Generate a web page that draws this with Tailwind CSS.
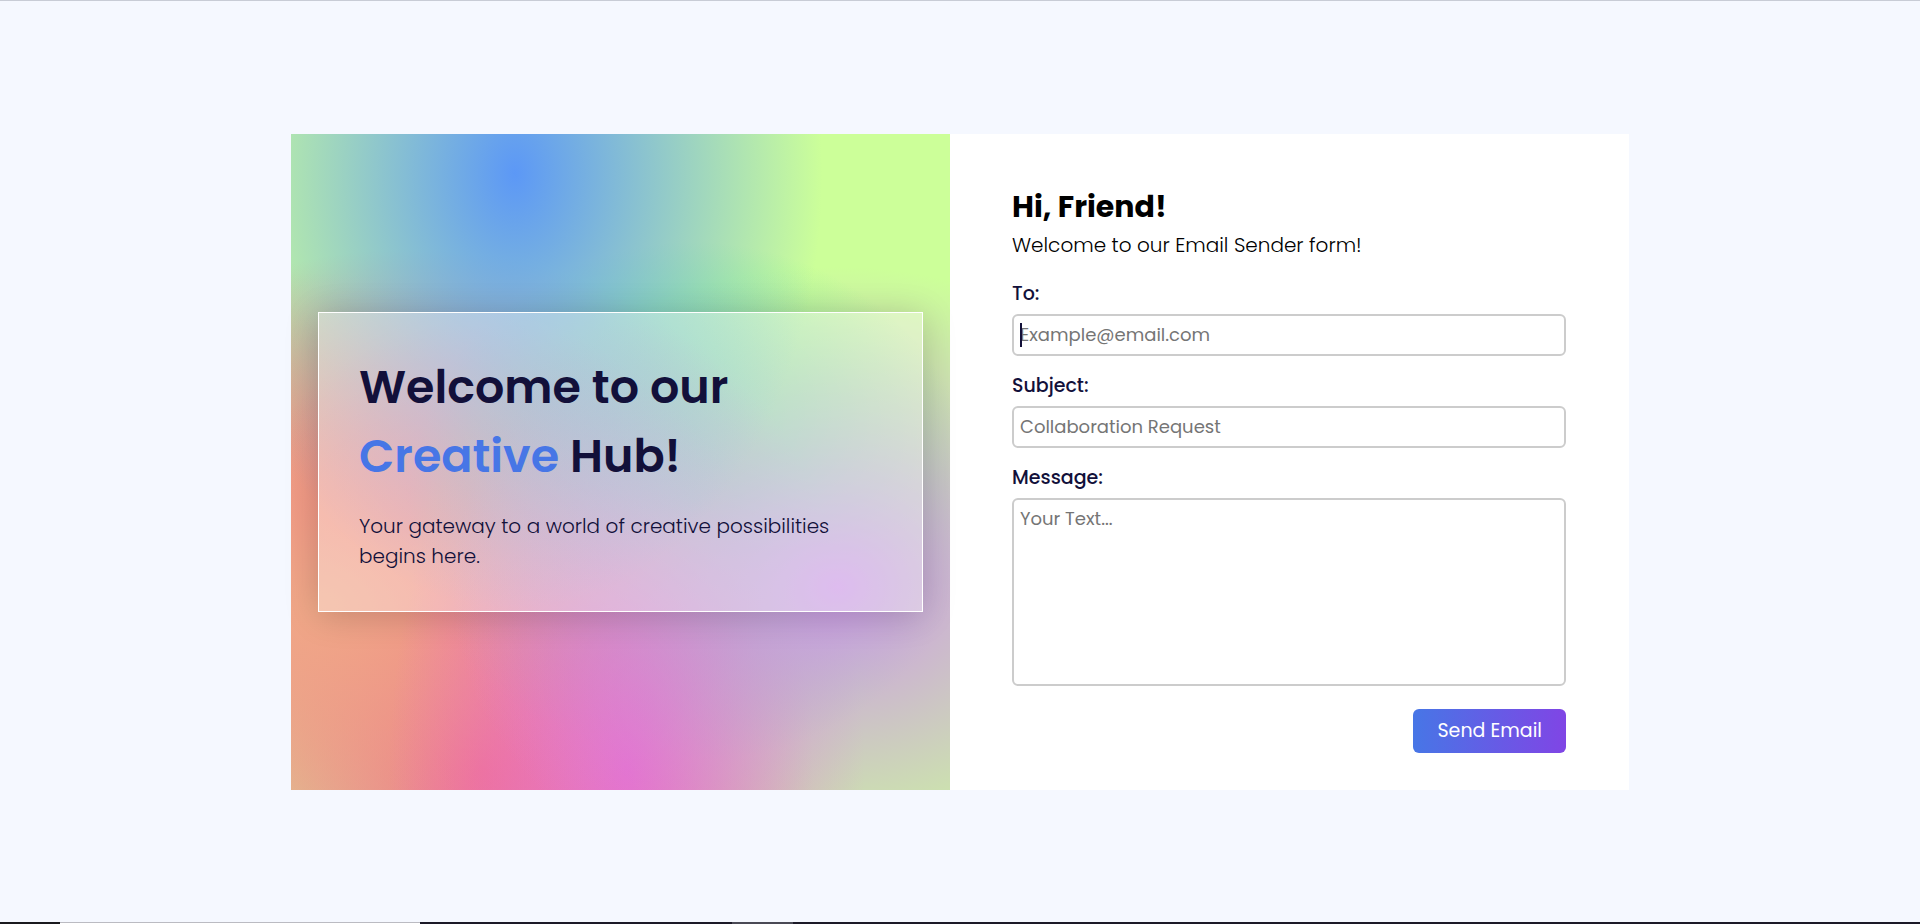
<!DOCTYPE html>
<html lang="en">
<head>
<meta charset="utf-8">
<title>Email Sender</title>
<script src="https://cdn.jsdelivr.net/npm/@tailwindcss/browser@4"></script>
<style>
.mesh {
  background-color: #ccff99;
  background-image:
    radial-gradient(at 34% 6%, #5c98f6 0px, transparent 50%),
    radial-gradient(at 83% 69%, #cc98e6 0px, transparent 50%),
    radial-gradient(at 51% 97%, #e86ccc 0px, transparent 50%),
    radial-gradient(at 4% 72%, #f0a888 0px, transparent 50%),
    radial-gradient(at 61% 56%, #38f078 0px, transparent 50%),
    radial-gradient(at 29% 97%, #f05888 0px, transparent 50%),
    radial-gradient(at 18% 60%, #ff5070 0px, transparent 50%);
}
</style>
</head>
<body class="flex min-h-screen flex-col border-t border-[#c8ccd6] bg-[#f5f8ff] font-[Poppins,Inter,sans-serif] text-black">
<main class="flex flex-1 items-center justify-center">
  <div class="grid w-full max-w-[1338px] grid-cols-[659fr_679fr] bg-white">
    <section class="mesh flex items-center px-[27px]">
      <div class="w-full border border-white bg-white/35 p-10 text-[#12103a] shadow-[0_4px_32px_rgba(0,0,0,0.18)]">
        <h1 class="text-[46px] leading-[69px] font-semibold">Welcome to our<br><span class="text-[#4776e6]">Creative</span> Hub!</h1>
        <p class="mt-5 text-[20px] leading-[30px] font-light">Your gateway to a world of creative possibilities begins here.</p>
      </div>
    </section>
    <form class="flex flex-col pt-[50px] pr-[63px] pb-[37px] pl-[62px]">
      <h2 class="text-[30px] leading-[46px] font-bold">Hi, Friend!</h2>
      <p class="text-[20px] leading-[30px] font-light">Welcome to our Email Sender form!</p>
      <label for="to" class="mt-5 text-[19px] leading-7 font-medium text-[#12103a]">To:</label>
      <div class="relative mt-1.5">
        <input id="to" type="email" placeholder="Example@email.com" class="block h-[42px] w-full rounded-md border-2 border-[#ccc] px-1.5 text-[18px] outline-none placeholder:text-[#757575]">
        <span class="absolute top-[9px] left-2 h-6 w-0.5 bg-[#12103a]"></span>
      </div>
      <label for="subject" class="mt-4 text-[19px] leading-7 font-medium text-[#12103a]">Subject:</label>
      <input id="subject" type="text" placeholder="Collaboration Request" class="mt-1.5 block h-[42px] w-full rounded-md border-2 border-[#ccc] px-1.5 text-[18px] outline-none placeholder:text-[#757575]">
      <label for="message" class="mt-4 text-[19px] leading-7 font-medium text-[#12103a]">Message:</label>
      <textarea id="message" placeholder="Your Text..." class="mt-1.5 block h-[188px] w-full resize-none rounded-md border-2 border-[#ccc] px-1.5 py-[5px] text-[18px] leading-7 outline-none placeholder:text-[#757575]"></textarea>
      <button type="submit" class="mt-[23px] h-11 self-end rounded-md bg-linear-to-r/srgb from-[#4776e6] to-[#8045e5] px-6 pt-0.5 text-[19px] text-white">Send Email</button>
    </form>
  </div>
</main>
<footer class="flex h-0.5 bg-[#1c1a28]">
  <div class="w-[60px] bg-[#1a1a1e]"></div>
  <div class="w-[360px] border-t border-[#bbbbc2] bg-white"></div>
  <div class="w-[312px]"></div>
  <div class="w-[61px] bg-[#4a4a55]"></div>
</footer>
</body>
</html>
